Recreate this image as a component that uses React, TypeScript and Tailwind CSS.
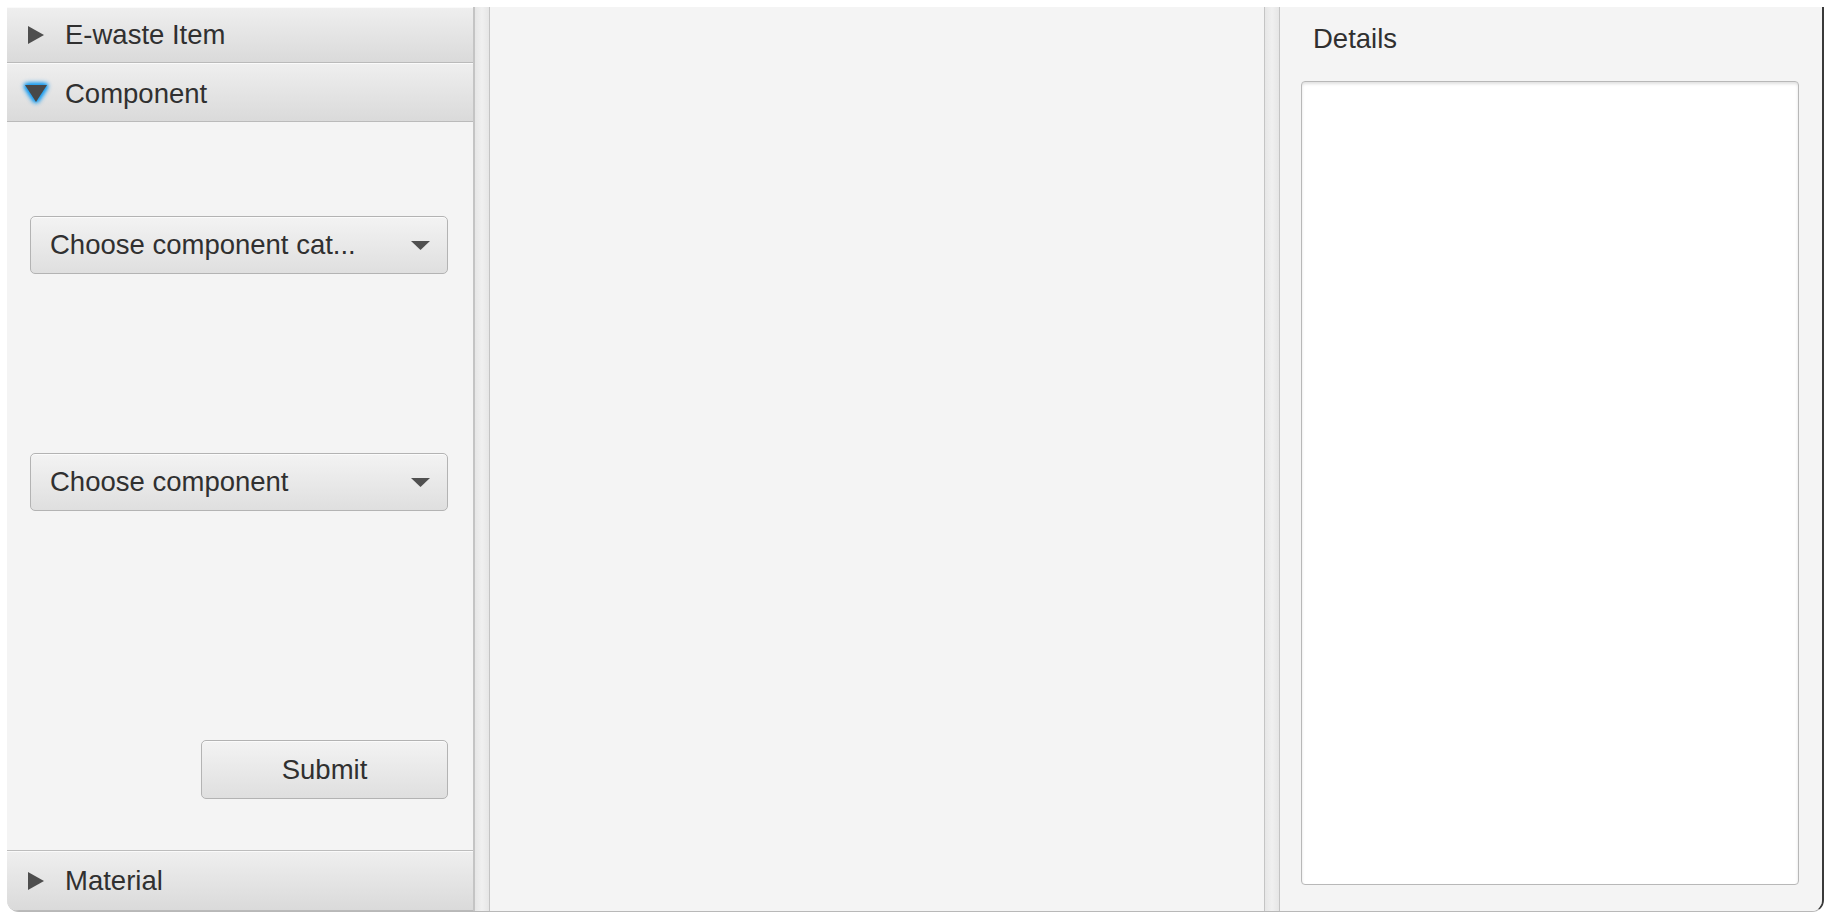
import React from "react";

const font = { fontFamily: '"Liberation Sans", Arial, sans-serif' };

function RightArrow() {
  return (
    <svg width="16" height="18" viewBox="0 0 16 18" className="shrink-0">
      <polygon points="0,0 16,9 0,18" fill="#4e4e4e" />
    </svg>
  );
}

function DownArrow() {
  return (
    <svg width="26" height="21" viewBox="-2 -2 26 21" className="shrink-0 [filter:drop-shadow(0_0_2px_#1f9ff0)_drop-shadow(0_0_2px_#1f9ff0)_drop-shadow(0_0_1px_#1f9ff0)]">
      <polygon points="0,0 22,0 11,17" fill="#484848" />
    </svg>
  );
}

function Header({ title, open, h = "h-[59px]", pad = "" }: { title: string; open?: boolean; h?: string; pad?: string }) {
  return (
    <div className={`${h} ${pad} shrink-0 flex items-center bg-gradient-to-b from-[#efefef] to-[#dadada] border-b border-[#bababa] shadow-[inset_0_1px_0_#fafafa]`}>
      <div className={`w-[58px] flex items-center ${open ? "pl-[16px]" : "pl-[21px]"}`}>
        {open ? <DownArrow /> : <RightArrow />}
      </div>
      <span className="text-[27.5px] text-[#303030] leading-none">{title}</span>
    </div>
  );
}

function Combo({ label }: { label: string }) {
  return (
    <div className="w-[418px] h-[58px] rounded-[5px] border border-[#b3b3b3] bg-gradient-to-b from-[#f3f3f3] to-[#dfdfdf] shadow-[inset_0_1px_0_#fbfbfb] flex items-center pl-[19px] pr-[17px]">
      <span className="flex-1 text-[27.5px] text-[#303030] leading-none">{label}</span>
      <svg width="19" height="9" viewBox="0 0 19 9">
        <polygon points="0,0 19,0 9.5,9" fill="#505050" />
      </svg>
    </div>
  );
}

function Divider() {
  return <div className="w-[16px] shrink-0 border-l border-r border-[#c4c4c4] bg-gradient-to-r from-[#e6e6e6] via-[#f0f0f0] to-[#e6e6e6]" />;
}

export default function App() {
  return (
    <div className="w-[1831px] h-[920px] bg-white pt-[7px] pl-[7px]" style={font}>
      <div className="w-[1817px] h-[905px] flex bg-[#f4f4f4] rounded-b-[12px] border-r-2 border-r-[#3a3a3a] border-b border-b-[#b8b8b8] overflow-hidden">
        {/* accordion */}
        <div className="w-[467px] shrink-0 flex flex-col border-r border-[#c4c4c4]">
          <Header title="E-waste Item" h="h-[56px]" />
          <Header title="Component" open pad="pt-[3px]" />
          <div className="flex-1 flex flex-col items-end pl-[23px] pr-[25px] bg-[#f4f4f4] border-b border-[#bdbdbd]">
            <div className="mt-[94px] self-start"><Combo label="Choose component cat..." /></div>
            <div className="mt-[179px] self-start"><Combo label="Choose component" /></div>
            <button className="mt-[229px] w-[247px] h-[59px] rounded-[5px] border border-[#b3b3b3] bg-gradient-to-b from-[#f3f3f3] to-[#dfdfdf] shadow-[inset_0_1px_0_#fbfbfb] text-[27.5px] text-[#303030] leading-none">
              Submit
            </button>
          </div>
          <Header title="Material" h="h-[60px]" />
        </div>

        <Divider />

        {/* main area */}
        <div className="w-[774px] shrink-0 bg-[#f4f4f4]" />

        <Divider />

        {/* details */}
        <div className="flex-1 flex flex-col bg-[#f4f4f4] pt-[16px] pl-[21px] pr-[23px] pb-[26px]">
          <div className="pl-[12px] h-[32px] leading-[32px] text-[27.5px] text-[#303030]">Details</div>
          <div className="mt-[26px] flex-1 bg-white rounded-[4px] border border-[#b8b8b8] shadow-[inset_0_2px_3px_rgba(0,0,0,0.12)]" />
        </div>
      </div>
    </div>
  );
}
